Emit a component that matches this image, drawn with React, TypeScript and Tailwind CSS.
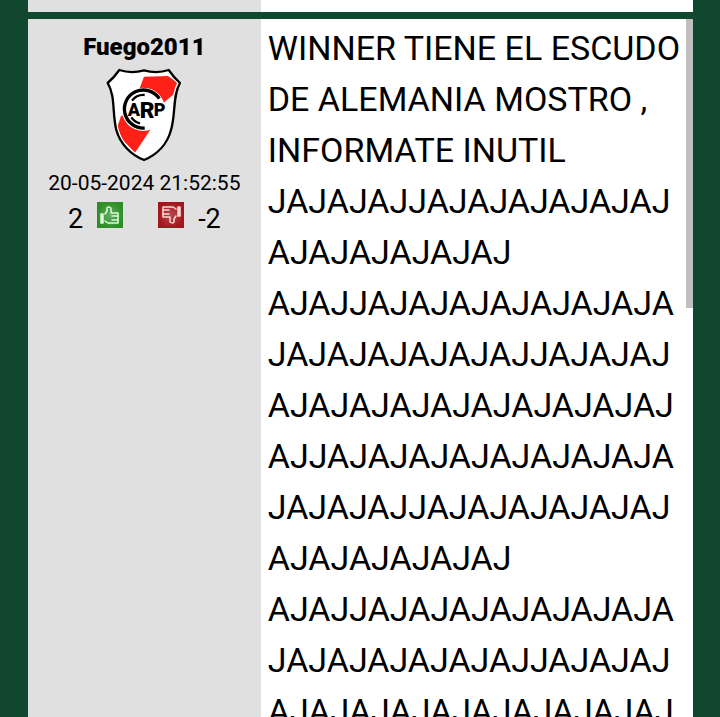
import React from "react";

const OPENING_LAUGH = "JAJAJAJJAJAJAJAJAJAJ" + "AJAJAJAJAJAJ";

const LONG_LAUGH =
  "AJAJJAJAJAJAJAJAJAJA" +
  "JAJAJAJAJAJAJJAJAJAJ" +
  "AJAJAJAJAJAJAJAJAJAJ" +
  "AJJAJAJAJAJAJAJAJAJA" +
  "JAJAJAJJAJAJAJAJAJAJ" +
  "AJAJAJAJAJAJ";

const MESSAGE = [
  "WINNER TIENE EL ESCUDO DE ALEMANIA MOSTRO , INFORMATE INUTIL",
  OPENING_LAUGH,
  LONG_LAUGH,
  LONG_LAUGH,
].join(" ");

function Crest() {
  return (
    <svg viewBox="36 24 228 282" className="h-[94px] w-[76px]" role="img" aria-label="River Plate">
      <defs>
        <clipPath id="shield">
          <path d="M39 68 Q58 52 75 27 Q112 40 150 28 Q188 40 225 27 Q241 52 260 68 C236 108 248 160 233 210 C222 254 190 286 150 302 C108 286 76 252 65 210 C52 160 64 108 39 68Z" />
        </clipPath>
      </defs>
      <g clipPath="url(#shield)">
        <rect x="36" y="24" width="228" height="282" fill="#fff" />
        <path d="M150 50 L222 48 L253 70 L244 98 L176 157 L120 130Z" fill="#ff2018" />
        <path d="M81 168 L110 160 L175 200 L123 278 L84 238 L70 200Z" fill="#ff2018" />
      </g>
      <path
        d="M39 68 Q58 52 75 27 Q112 40 150 28 Q188 40 225 27 Q241 52 260 68 C236 108 248 160 233 210 C222 254 190 286 150 302 C108 286 76 252 65 210 C52 160 64 108 39 68Z"
        fill="none"
        stroke="#fff"
        strokeWidth="18"
        clipPath="url(#shield)"
      />
      <path
        d="M41 69 Q60 53 76 30 Q112 42 150 31 Q188 42 224 30 Q240 53 258 69 C235 108 246 160 231 210 C220 252 189 284 150 300 C109 284 78 250 67 210 C54 160 65 108 41 69Z"
        fill="none"
        stroke="#000"
        strokeWidth="7"
        strokeLinejoin="round"
      />
      <circle cx="148" cy="148" r="65" fill="#fff" />
      <path d="M196 116 A57 57 0 1 0 152 204" fill="none" stroke="#000" strokeWidth="10" />
      <path d="M152 105 A43 43 0 0 0 114 122 M112 172 A43 43 0 0 0 138 190" fill="none" stroke="#000" strokeWidth="7" />
      <g className="font-['Roboto',sans-serif] font-black" fill="#000">
        <text x="101" y="167" fontSize="54">A</text>
        <text x="137" y="174" fontSize="68">R</text>
        <text x="179" y="167" fontSize="54">P</text>
      </g>
    </svg>
  );
}

function VoteIcon({ down = false }: { down?: boolean }) {
  return (
    <svg viewBox="0 0 26 26" className="block size-[26px]" aria-hidden="true">
      <defs>
        <radialGradient id={down ? "red" : "green"}>
          <stop offset="0" stopColor={down ? "#b84a50" : "#66a866"} />
          <stop offset="1" stopColor={down ? "#a3161c" : "#2c8f24"} />
        </radialGradient>
      </defs>
      <rect width="26" height="26" fill={down ? "url(#red)" : "url(#green)"} />
      <g
        transform={down ? "rotate(180 13 13)" : undefined}
        fill="none"
        stroke={down ? "#ffd9d9" : "#d9ffd6"}
        strokeWidth="1.5"
        strokeLinejoin="round"
        strokeLinecap="round"
      >
        <path d="M4 12h2v9H4z" fill={down ? "#ffd9d9" : "#d9ffd6"} />
        <path d="M8 12 L10 9 V6 Q11 4 14 6 V11 H21 V21 H11 L8 19" />
        <path d="M15 14h6M15 18h6" />
      </g>
    </svg>
  );
}

export default function App() {
  return (
    <main className="flex h-screen flex-col gap-[7px] overflow-hidden bg-[#10472e] pr-[27px] pl-7 font-['Roboto',sans-serif] text-black">
      <div className="flex h-3 shrink-0">
        <div className="w-[35%] bg-[#e0e0e0]" />
        <div className="flex-1 bg-white" />
      </div>
      <article className="relative flex min-h-0 flex-1">
        <aside className="flex w-[35%] shrink-0 flex-col items-center bg-[#e0e0e0] pt-4">
          <h2 className="text-[24px] leading-6 font-black">Fuego2011</h2>
          <div className="mt-[9px]">
            <Crest />
          </div>
          <time dateTime="2024-05-20T21:52:55" className="mt-[9px] text-[21px] leading-6">
            20-05-2024 21:52:55
          </time>
          <div className="mt-[7px] flex items-start text-[27px] leading-[34px]">
            <span>2</span>
            <button type="button" aria-label="Me gusta" className="ml-[14px]">
              <VoteIcon />
            </button>
            <button type="button" aria-label="No me gusta" className="ml-[35px]">
              <VoteIcon down />
            </button>
            <span className="ml-[14px]">-2</span>
          </div>
        </aside>
        <div className="min-w-0 flex-1 overflow-hidden bg-white px-[7px] pt-1">
          <p className="text-[34px] leading-[51px] wrap-break-word">{MESSAGE}</p>
        </div>
        <div className="absolute top-0 right-0 h-[289px] w-[7px] bg-[#bfbfbf]" />
      </article>
    </main>
  );
}
